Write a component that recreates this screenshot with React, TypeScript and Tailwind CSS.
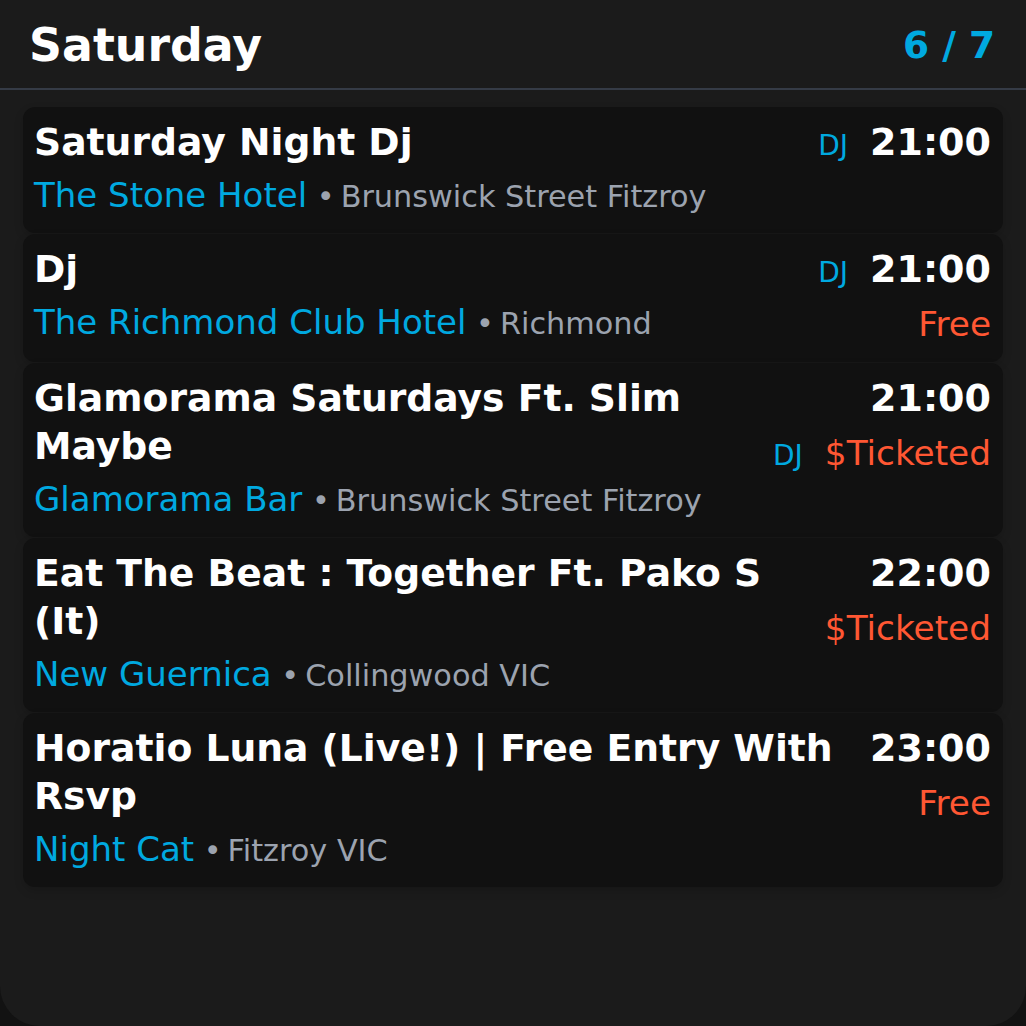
import React from "react";

type Gig = {
  title: string;
  venue: string;
  area: string;
  time: string;
  dj?: "top" | "bottom";
  price?: string;
};

const gigs: Gig[] = [
  {
    title: "Saturday Night Dj",
    venue: "The Stone Hotel",
    area: "Brunswick Street Fitzroy",
    time: "21:00",
    dj: "top",
  },
  {
    title: "Dj",
    venue: "The Richmond Club Hotel",
    area: "Richmond",
    time: "21:00",
    dj: "top",
    price: "Free",
  },
  {
    title: "Glamorama Saturdays Ft. Slim Maybe",
    venue: "Glamorama Bar",
    area: "Brunswick Street Fitzroy",
    time: "21:00",
    dj: "bottom",
    price: "$Ticketed",
  },
  {
    title: "Eat The Beat : Together Ft. Pako S (It)",
    venue: "New Guernica",
    area: "Collingwood VIC",
    time: "22:00",
    price: "$Ticketed",
  },
  {
    title: "Horatio Luna (Live!) | Free Entry With Rsvp",
    venue: "Night Cat",
    area: "Fitzroy VIC",
    time: "23:00",
    price: "Free",
  },
];

function DjTag() {
  return <span className="text-[28px] leading-none text-[#00a9e0]">DJ</span>;
}

function GigCard({ gig }: { gig: Gig }) {
  return (
    <div className="flex gap-4 rounded-xl bg-[#111111] pl-[11px] pr-3 pt-[11px] pb-[14px] shadow-[0_4px_10px_rgba(0,0,0,0.15)]">
      <div className="min-w-0 flex-1">
        <div className="text-[37.7px] font-bold leading-[48px] text-white">
          {gig.title}
        </div>
        <div className="mt-[5px] text-[34px] leading-[48px] text-[#00a9e0]">
          {gig.venue}
          <span className="text-[30.3px] leading-none text-[#9ca3af]">
            {" "}
            •<span className="ml-[6px]">{gig.area}</span>
          </span>
        </div>
      </div>
      <div className="flex shrink-0 flex-col items-end">
        <div className="flex h-[48px] items-baseline gap-[22px] pt-[2px]">
          {gig.dj === "top" && <DjTag />}
          <span className="text-[38px] font-bold leading-[44px] text-white">
            {gig.time}
          </span>
        </div>
        {gig.price && (
          <div className="mt-[7px] flex h-[48px] items-baseline gap-[22px] pt-[4px]">
            {gig.dj === "bottom" && <DjTag />}
            <span className="text-[34.3px] leading-[40px] text-[#ff5733]">
              {gig.price}
            </span>
          </div>
        )}
      </div>
    </div>
  );
}

export default function App() {
  return (
    <div
      className="h-screen bg-[#121212]"
      style={{ fontFamily: '"DejaVu Sans", sans-serif' }}
    >
      <div className="flex h-full flex-col rounded-b-[40px] bg-[#1b1b1b]">
        {/* Header */}
        <div className="flex items-center justify-between border-b-2 border-[#353b46] pl-[29px] pr-[31px] pt-[18px] pb-[16px]">
          <h1 className="text-[45.8px] font-bold leading-[54px] text-white">
            Saturday
          </h1>
          <span className="text-[37.5px] font-bold leading-[54px] text-[#00a9e0]">
            6 / 7
          </span>
        </div>

        {/* Gig list */}
        <div className="flex flex-col gap-px px-[23px] pt-[17px]">
          {gigs.map((gig) => (
            <GigCard key={gig.title} gig={gig} />
          ))}
        </div>
      </div>
    </div>
  );
}
